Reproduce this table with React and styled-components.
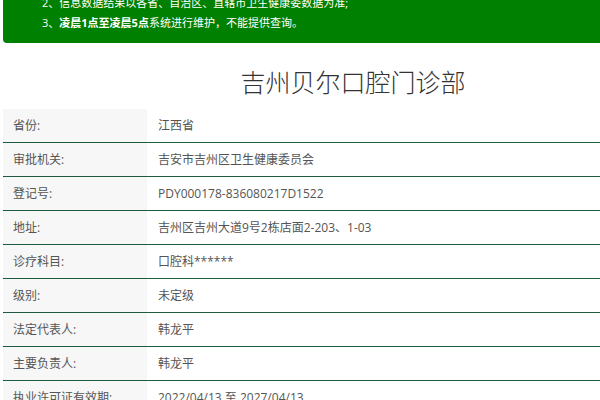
import styled, { createGlobalStyle } from "styled-components";

const GlobalStyle = createGlobalStyle`
  html, body {
    margin: 0;
    padding: 0;
    background: #fff;
    overflow: hidden;
  }
  body {
    font-family: "Open Sans", "Noto Sans CJK SC", sans-serif;
  }
`;

const rows = [
  ["省份:", "江西省"],
  ["审批机关:", "吉安市吉州区卫生健康委员会"],
  ["登记号:", "PDY000178-836080217D1522"],
  ["地址:", "吉州区吉州大道9号2栋店面2-203、1-03"],
  ["诊疗科目:", "口腔科******"],
  ["级别:", "未定级"],
  ["法定代表人:", "韩龙平"],
  ["主要负责人:", "韩龙平"],
  ["执业许可证有效期:", "2022/04/13 至 2027/04/13"],
];

const App = () => {
  return (
    <Page>
      <GlobalStyle />
      <Notice>
        <p>2、信息数据结果以各省、自治区、直辖市卫生健康委数据为准;</p>
        <p>
          3、<b>凌晨1点至凌晨5点</b>系统进行维护，不能提供查询。
        </p>
      </Notice>
      <Title>吉州贝尔口腔门诊部</Title>
      <InfoTable>
        <tbody>
          {rows.map(([label, value], i) => (
            <tr key={i}>
              <Label>{label}</Label>
              <Value>{value}</Value>
            </tr>
          ))}
        </tbody>
      </InfoTable>
    </Page>
  );
};

export default App;

const Page = styled.div`
  width: 700px;
  margin: -17px 0 0 3px;
`;

const Notice = styled.div`
  background: #008000;
  color: #fff;
  border-radius: 0 0 4px 4px;
  padding: 10px 20px 10px 39px;
  font-size: 11px;
  line-height: 20px;

  p {
    margin: 0;
  }
  b {
    font-weight: 700;
  }
`;

const Title = styled.h1`
  margin: 0;
  padding: 22px 0 10px;
  text-align: center;
  font-size: 25px;
  line-height: 34px;
  font-weight: 300;
  color: #333;
`;

const InfoTable = styled.table`
  width: 100%;
  border-collapse: collapse;
  font-size: 12px;
  font-weight: 400;
  color: #555;

  tr {
    border-bottom: 1px solid #1e5a3e;
  }
`;

const Label = styled.td`
  width: 124px;
  padding: 8px 10px 7px 10px;
  background: #f7f7f7;
  line-height: 18px;
  white-space: nowrap;
`;

const Value = styled.td`
  padding: 8px 10px 7px 11px;
  line-height: 18px;
`;
